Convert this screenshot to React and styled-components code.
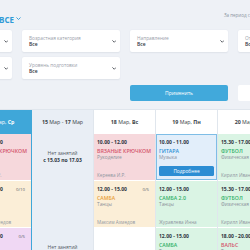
import React from 'react';
import styled, { createGlobalStyle } from 'styled-components';

const GlobalStyle = createGlobalStyle`
  body {
    margin: 0;
    background: #eef1f6;
    font-family: "Open Sans", "Liberation Sans", sans-serif;
    overflow: hidden;
  }
  * { box-sizing: border-box; }
`;

const filters = [
    { label: 'Филиал', value: 'Все' },
    { label: 'Возрастная категория', value: 'Все' },
    { label: 'Направление', value: 'Все' },
    { label: 'Отделение', value: 'Все' },
    { label: 'Педагог', value: 'Все' },
    { label: 'Уровень подготовки', value: 'Все' },
];

const tones = {
    pink: { bg: '#f6d8dc', fg: '#d4566c' },
    beige: { bg: '#fbeed7', fg: '#e8a03a' },
    purple: { bg: '#f0d8f4', fg: '#b857cb' },
    green: { bg: '#daf4e4', fg: '#33b168' },
    blue: { bg: '#e2eefa', fg: '#2d8fd5' },
};

const days = [
    {
        num: '14', month: 'Мар,', wd: 'Ср', today: true,
        lessons: [
            { time: '10.00 - 12.00', title: 'Вязаные крючком', subject: 'Рукоделие', teacher: 'Кереева И.Р.', tone: 'pink' },
            { time: '12.00 - 15.00', title: 'Самба', subject: 'Танцы', teacher: 'Максим Ахмедов', tone: 'beige', count: '0/10' },
            { time: '14.00 - 16.00', title: 'Шитьё', subject: 'Рукоделие', teacher: 'Кереева И.Р.', tone: 'purple', count: '0/5' },
        ],
    },
    { range: '15 Мар - 17 Мар', empty: 'с 15.03 по 17.03' },
    {
        num: '18', month: 'Мар,', wd: 'Вс',
        lessons: [
            { time: '10.00 - 12.00', title: 'Вязаные крючком', subject: 'Рукоделие', teacher: 'Кереева И.Р.', tone: 'pink' },
            { time: '12.00 - 15.00', title: 'Самба', subject: 'Танцы', teacher: 'Максим Ахмедов', tone: 'beige', count: '0/5' },
        ],
    },
    {
        num: '19', month: 'Мар,', wd: 'Пн',
        lessons: [
            { time: '10.00 - 11.00', title: 'Гитара', subject: 'Музыка', tone: 'blue', selected: true },
            { time: '12.00 - 15.00', title: 'Самба 2.0', subject: 'Танцы', teacher: 'Журавлева Инна', tone: 'green' },
            { time: '12.00 - 15.00', title: 'Самба', subject: 'Танцы', teacher: 'Журавлева Инна', tone: 'green' },
        ],
    },
    {
        num: '20', month: 'Мар,', wd: 'Вт',
        lessons: [
            { time: '15.30 - 17.00', title: 'Футбол', subject: 'Физическая культура', teacher: 'Кирилл Иванов', tone: 'green' },
            { time: '15.30 - 17.00', title: 'Футбол', subject: 'Физическая культура', teacher: 'Кирилл Иванов', tone: 'green' },
            { time: '18.00 - 20.00', title: 'Вальс', subject: 'Танцы', teacher: 'Журавлева Инна', tone: 'green', titleTone: 'pink' },
        ],
    },
];

const Chevron = ({ size = 5, color = '#3a3f47' }) => (
    <svg width={size} height={size * 0.7} viewBox="0 0 10 7">
        <path d="M1.5 1.5 L5 5 L8.5 1.5" fill="none" stroke={color} strokeWidth="1.8" strokeLinecap="round" strokeLinejoin="round" />
    </svg>
);

const Lesson = ({ lesson }) => {
    const tone = tones[lesson.tone];
    const titleColor = tones[lesson.titleTone || lesson.tone].fg;
    return (
        <Card bg={tone.bg} selected={lesson.selected}>
            <TimeRow>
                <Time>{lesson.time}</Time>
                {lesson.count && <Counter>{lesson.count}</Counter>}
            </TimeRow>
            <LessonTitle color={titleColor}>{lesson.title}</LessonTitle>
            <Subject>{lesson.subject}</Subject>
            {lesson.selected
                ? <DetailsButton>Подробнее</DetailsButton>
                : <Teacher>{lesson.teacher}</Teacher>}
        </Card>
    );
};

const App = () => {
    return (
        <Page>
            <GlobalStyle />
            <Shift>
                <TopBar>
                    <Title>ВСЕ <Chevron size={5} color="#2f9bd6" /></Title>
                    <Period>За период с 14.03 по 20.03</Period>
                </TopBar>
                <Filters>
                    {filters.map(f => (
                        <FilterCard key={f.label}>
                            <Field>
                                <Label>{f.label}</Label>
                                <Value>{f.value}</Value>
                            </Field>
                            <Chevron size={4.5} />
                        </FilterCard>
                    ))}
                </Filters>
                <Actions>
                    <ApplyButton>Применить</ApplyButton>
                    <ResetButton>Сбросить</ResetButton>
                </Actions>
                <Calendar>
                    {days.map((d, i) => (
                        <DayColumn key={i} today={d.today} empty={!!d.range}>
                            <DayHeader today={d.today}>
                                {d.range
                                    ? <span><b>15</b> Мар - <b>17</b> Мар</span>
                                    : <span><b>{d.num}</b> {d.month} <b>{d.wd}</b></span>}
                            </DayHeader>
                            {d.range
                                ? [0, 1].map(k => (
                                    <NoLessons key={k}>
                                        Нет занятий
                                        <strong>{d.empty}</strong>
                                    </NoLessons>
                                ))
                                : d.lessons.map((l, k) => <Lesson key={k} lesson={l} />)}
                        </DayColumn>
                    ))}
                </Calendar>
            </Shift>
        </Page>
    );
};

export default App;

const Page = styled.div`
    width: 250px;
    height: 250px;
    overflow: hidden;
`;

const Shift = styled.div`
    margin-left: -86px;
    width: 440px;
`;

const TopBar = styled.div`
    display: flex;
    height: 30px;
`;

const Title = styled.div`
    margin-left: 85px;
    margin-top: 14px;
    height: 10px;
    display: flex;
    align-items: center;
    gap: 2px;
    font-size: 8px;
    font-weight: 700;
    color: #2f9bd6;
`;

const Period = styled.div`
    margin-left: auto;
    width: 130px;
    margin-top: 12px;
    font-size: 4.5px;
    line-height: 6px;
    color: #8a93a0;
    white-space: nowrap;
`;

const Filters = styled.div`
    display: grid;
    grid-template-columns: repeat(4, 98px);
    grid-auto-rows: 22px;
    column-gap: 10px;
    row-gap: 5px;
`;

const FilterCard = styled.div`
    background: #fff;
    border-radius: 2px;
    box-shadow: 0 0.5px 1.5px rgba(40, 60, 90, 0.08);
    padding: 5px 4px 0 7px;
    display: flex;
    justify-content: space-between;
    align-items: flex-start;

    svg {
        margin-top: 5px;
    }
`;

const Field = styled.div`
    display: flex;
    flex-direction: column;
`;

const Label = styled.span`
    font-size: 4.8px;
    line-height: 6px;
    color: #9aa1ab;
    white-space: nowrap;
`;

const Value = styled.span`
    font-size: 5px;
    line-height: 6px;
    color: #2d3340;
    font-weight: 600;
`;

const Actions = styled.div`
    display: grid;
    grid-template-columns: repeat(4, 98px);
    column-gap: 10px;
    margin-top: 6px;
    height: 16px;
`;

const ApplyButton = styled.button`
    grid-column: 3;
    border: none;
    border-radius: 2px;
    background: #41a9db;
    color: #fff;
    font-family: inherit;
    font-size: 5px;
    padding: 0;
`;

const ResetButton = styled.button`
    grid-column: 4;
    border: none;
    border-radius: 2px;
    background: #fff;
    color: #41a9db;
    font-family: inherit;
    font-size: 5px;
    padding: 0;
`;

const Calendar = styled.div`
    display: flex;
    margin-top: 8px;
    margin-left: 56px;
    border-top: 1px solid #e0e6ed;
    background: #fff;
    min-height: 200px;
`;

const DayColumn = styled.div`
    flex: none;
    width: 62px;
    display: flex;
    flex-direction: column;
    background: ${p => (p.empty ? '#e9eef5' : '#fff')};
    border-right: 1px solid ${p => (p.today ? '#3fa7d9' : '#e0e6ed')};
`;

const DayHeader = styled.div`
    height: 24px;
    display: flex;
    align-items: center;
    justify-content: center;
    font-size: 5.3px;
    color: ${p => (p.today ? '#fff' : '#3a3f47')};
    background: ${p => (p.today ? '#3fa7d9' : 'transparent')};
    white-space: nowrap;

    b {
        font-weight: 700;
    }
`;

const Card = styled.div`
    height: 46px;
    margin-bottom: 1px;
    padding: ${p => (p.selected ? '4px 2px 2px 2px' : '5px 3px 2px 3px')};
    display: flex;
    flex-direction: column;
    background: ${p => p.bg};
    border: ${p => (p.selected ? '1px solid #7ebde6' : 'none')};
`;

const TimeRow = styled.div`
    display: flex;
    justify-content: space-between;
    align-items: center;
    height: 6px;
`;

const Time = styled.span`
    font-size: 5px;
    font-weight: 700;
    color: #2d3340;
    white-space: nowrap;
`;

const Counter = styled.span`
    font-size: 4.3px;
    color: #555c66;
    margin-right: 3px;
`;

const LessonTitle = styled.div`
    margin-top: 3px;
    font-size: 5.2px;
    line-height: 6px;
    font-weight: 600;
    text-transform: uppercase;
    color: ${p => p.color};
    white-space: nowrap;
`;

const Subject = styled.div`
    font-size: 4.8px;
    line-height: 6px;
    color: #8b919b;
    white-space: nowrap;
`;

const Teacher = styled.div`
    margin-top: auto;
    font-size: 4.6px;
    line-height: 6px;
    color: #8f96a0;
    white-space: nowrap;
`;

const DetailsButton = styled.button`
    margin-top: auto;
    margin-bottom: 1px;
    align-self: center;
    width: 55px;
    height: 10px;
    border: none;
    border-radius: 1.5px;
    background: #2c8dd3;
    color: #fff;
    font-family: inherit;
    font-size: 4.8px;
    padding: 0;
`;

const NoLessons = styled.div`
    height: 94px;
    padding-top: 16px;
    display: flex;
    flex-direction: column;
    align-items: center;
    font-size: 5px;
    line-height: 6.5px;
    color: #555c66;

    strong {
        font-weight: 700;
        color: #2d3340;
    }
`;
